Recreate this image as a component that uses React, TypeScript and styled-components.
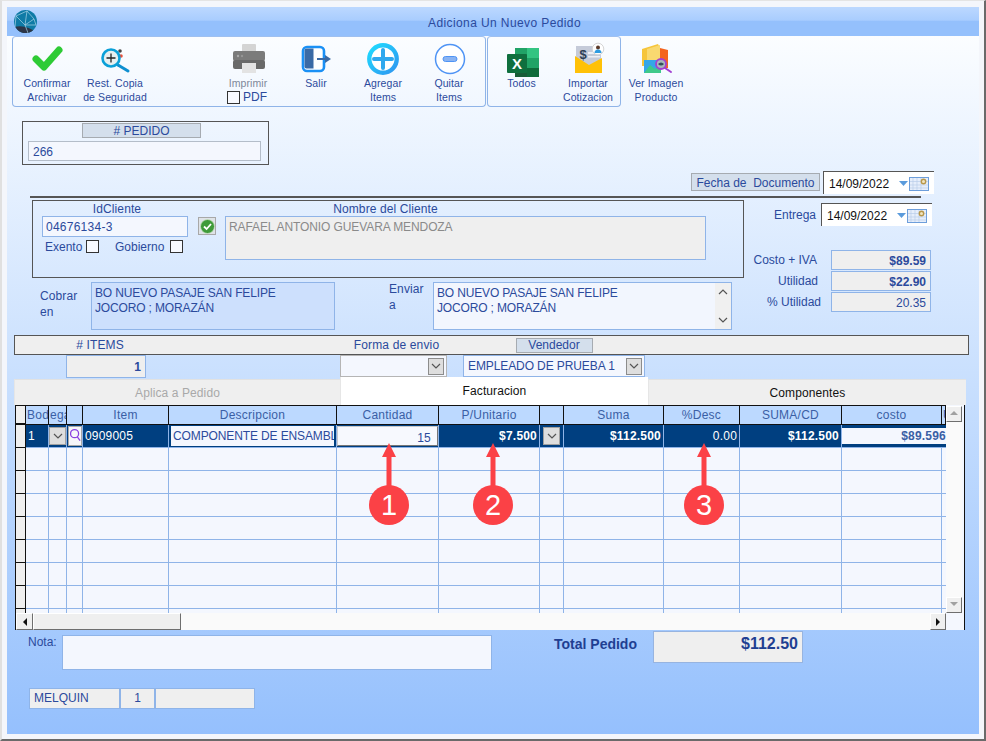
import styled, { createGlobalStyle } from 'styled-components';

const GlobalStyle = createGlobalStyle`
  html, body {
    margin: 0;
    padding: 0;
    background: #f4f6fb;
  }
  * {
    box-sizing: border-box;
  }
`;

const TEXT = '#2b4a9c';
const LINE = '#8fb4e8';
const COLS = '10px 23px 18px 16px 86px 168px 102px 101px 24px 100px 76px 102px 100px 4px';

const Page = styled.div`
  position: relative;
  width: 986px;
  height: 741px;
  padding: 6px 5px 5px 5px;
  border-top: 1px solid #e4e4e4;
  border-left: 2px solid #e0e0e0;
  border-right: 2px solid #6a6a6a;
  border-bottom: 2px solid #6a6a6a;
  background: #f4f6fb;
  font-family: "Liberation Sans", Arial, sans-serif;
  font-size: 12px;
  color: ${TEXT};
  overflow: hidden;
`;

const Win = styled.div`
  width: 972px;
  height: 727px;
  background: linear-gradient(180deg, #fbfdff 0, #fbfdff 29px, #c8dffe 52%, #95c0fd 100%);
`;

const TitleBar = styled.div`
  position: relative;
  height: 29px;
  display: flex;
  align-items: center;
  justify-content: center;
  padding: 2px 0 0 23px;
  background: linear-gradient(180deg, #bcd8ff 0, #a9cdfe 45%, #94c0fc 50%, #94c0fc 100%);
  font-size: 12px;
  letter-spacing: 0.4px;
`;

const Logo = styled.svg`
  position: absolute;
  left: 7px;
  top: 3px;
`;

const Toolbar = styled.div`
  display: flex;
  height: 71px;
  padding-left: 5px;
`;

const ToolGroup = styled.div<{ $w: number; $pl: number }>`
  display: flex;
  flex: none;
  width: ${(p) => p.$w}px;
  margin-right: 1px;
  padding: 1px 0 0 ${(p) => p.$pl}px;
  border: 1px solid ${LINE};
  border-top-color: #9fc0f0;
  border-radius: 4px;
`;

const Tool = styled.div<{ $w: number; $ml?: number; $pt?: number }>`
  display: flex;
  flex-direction: column;
  align-items: center;
  flex: none;
  width: ${(p) => p.$w}px;
  margin-left: ${(p) => p.$ml || 0}px;
  padding-top: ${(p) => p.$pt || 0}px;
  font-size: 10.5px;
  line-height: 14px;
  text-align: center;
  white-space: nowrap;
`;

const ToolIcon = styled.svg`
  display: block;
  flex: none;
  overflow: visible;
`;

const ToolText = styled.span<{ $muted?: boolean }>`
  color: ${(p) => (p.$muted ? '#7d8799' : TEXT)};
  letter-spacing: 0.1px;
`;

const PdfCheck = styled.label`
  display: flex;
  align-items: center;
  gap: 3px;
  margin-left: -2px;
  font-size: 12px;
`;

const PedidoBox = styled.div`
  display: flex;
  flex-direction: column;
  width: 247px;
  height: 44px;
  margin: 14px 0 0 15px;
  padding-top: 1px;
  border: 1px solid #555;
`;

const TagLabel = styled.div<{ $w: number; $h?: number; $ml?: number }>`
  display: flex;
  align-items: center;
  justify-content: center;
  flex: none;
  width: ${(p) => p.$w}px;
  height: ${(p) => p.$h || 15}px;
  margin-left: ${(p) => p.$ml || 0}px;
  background: #d4dfec;
  border: 1px solid #a6abb1;
  white-space: pre;
`;

const PedidoInput = styled.div`
  width: 233px;
  height: 20px;
  margin: 3px 0 0 5px;
  padding-left: 4px;
  background: #f4f7fe;
  border: 1px solid #b4bdc9;
  line-height: 20px;
`;

const FechaRow = styled.div`
  display: flex;
  justify-content: flex-end;
  align-items: center;
  gap: 3px;
  height: 22px;
  margin-top: 6px;
  padding-right: 45px;
`;

const FechaTag = styled(TagLabel)`
  padding-top: 1px;
`;

const DateBox = styled.div`
  display: flex;
  align-items: center;
  width: 111px;
  height: 23px;
  padding: 2px 5px 0 5px;
  background: #fff;
  border-top: 1px solid #555;
  border-left: 1px solid #555;
  color: #111;
`;

const DateText = styled.span`
  flex: 1;
`;

const Rule = styled.div`
  width: 891px;
  height: 2px;
  margin: 3px 0 0 23px;
  background: #555;
`;

const Main = styled.div`
  display: flex;
  margin-top: 2px;
  padding-left: 25px;
`;

const LeftCol = styled.div`
  flex: none;
  width: 712px;
`;

const ClientBox = styled.div`
  display: flex;
  height: 78px;
  padding-left: 9px;
  border: 1px solid #555;
`;

const FieldCol = styled.div<{ $w: number }>`
  display: flex;
  flex-direction: column;
  flex: none;
  width: ${(p) => p.$w}px;
`;

const FieldLabel = styled.div<{ $pl?: number; $pr?: number }>`
  height: 15px;
  padding: 0 ${(p) => p.$pr || 0}px 0 ${(p) => p.$pl || 0}px;
  line-height: 17px;
  text-align: center;
  letter-spacing: 0.1px;
`;

const IdInput = styled.div`
  height: 21px;
  padding-left: 3px;
  background: #f4f7fe;
  border: 1px solid ${LINE};
  line-height: 20px;
  letter-spacing: 0.25px;
`;

const ChecksRow = styled.div`
  display: flex;
  align-items: center;
  height: 15px;
  margin-top: 2px;
  padding-left: 3px;
`;

const CheckLabel = styled.span<{ $w: number }>`
  width: ${(p) => p.$w}px;
`;

const CheckSquare = styled.span<{ $mr?: number }>`
  flex: none;
  width: 13px;
  height: 13px;
  margin-right: ${(p) => p.$mr || 0}px;
  background: #f8faff;
  border: 1px solid #333;
`;

const ValidButton = styled.div`
  display: flex;
  align-items: center;
  justify-content: center;
  flex: none;
  width: 18px;
  height: 18px;
  margin: 16px 9px 0 10px;
  background: #dfe3e8;
  border: 1px solid #a8a8a8;
`;

const NameBox = styled.div`
  height: 44px;
  padding: 3px 0 0 3px;
  background: #efefef;
  border: 1px solid ${LINE};
  color: #8a8a8a;
  letter-spacing: -0.1px;
`;

const AddressRow = styled.div`
  display: flex;
  height: 48px;
  margin-top: 4px;
`;

const AddressLabel = styled.div<{ $w: number; $ml: number; $mt: number }>`
  flex: none;
  width: ${(p) => p.$w}px;
  margin: ${(p) => p.$mt}px 0 0 ${(p) => p.$ml}px;
  line-height: 15.5px;
  letter-spacing: 0.1px;
`;

const AddressBox = styled.div<{ $w: number; $light?: boolean }>`
  position: relative;
  flex: none;
  width: ${(p) => p.$w}px;
  padding: 3px 0 0 3px;
  background: ${(p) => (p.$light ? '#f2f6fe' : '#cde0fd')};
  border: 1px solid ${LINE};
  line-height: 15px;
  letter-spacing: -0.15px;
`;

const TextScroll = styled.div`
  position: absolute;
  top: 0;
  right: 0;
  bottom: 0;
  display: flex;
  flex-direction: column;
  align-items: center;
  justify-content: space-between;
  width: 16px;
  padding: 6px 0;
  background: #f0f0f0;
`;

const RightCol = styled.div`
  flex: none;
  width: 191px;
  padding-top: 3px;
`;

const EntregaRow = styled.div`
  display: flex;
  justify-content: flex-end;
  align-items: center;
  gap: 5px;
  padding-right: 3px;
`;

const Stats = styled.div`
  display: flex;
  flex-direction: column;
  gap: 1px;
  margin-top: 24px;
  padding-right: 4px;
`;

const StatRow = styled.div`
  display: flex;
  justify-content: flex-end;
  align-items: center;
  height: 20px;
`;

const StatLabel = styled.span<{ $mr: number }>`
  margin-right: ${(p) => p.$mr}px;
`;

const StatValue = styled.div<{ $bold?: boolean }>`
  width: 100px;
  height: 20px;
  padding: 0 4px;
  background: #efefef;
  border: 1px solid ${LINE};
  text-align: right;
  font-weight: ${(p) => (p.$bold ? 700 : 400)};
  line-height: 20px;
`;

const ItemsBar = styled.div`
  display: grid;
  grid-template-columns: 51px 80px 194px 107px 16px 182px 1fr;
  align-items: center;
  width: 955px;
  height: 20px;
  margin: 5px 0 0 7px;
  background: #efefef;
  border: 1px solid #555;
`;

const BarText = styled.div<{ $col: number; $pr?: number; $pl?: number }>`
  grid-column: ${(p) => p.$col};
  padding: 0 ${(p) => p.$pr || 0}px 0 ${(p) => p.$pl || 0}px;
  text-align: center;
  letter-spacing: 0.15px;
  white-space: nowrap;
`;

const VendedorTag = styled(TagLabel)`
  grid-column: 6;
  justify-self: center;
`;

const ItemsRow = styled.div`
  display: grid;
  grid-template-columns: 52px 80px 194px 107px 16px 182px;
  height: 24px;
  margin-left: 7px;
`;

const CountBox = styled.div`
  grid-column: 2;
  height: 23px;
  padding-right: 4px;
  background: #efefef;
  border: 1px solid ${LINE};
  text-align: right;
  font-weight: 700;
  line-height: 23px;
`;

const SelectBox = styled.div<{ $col: number; $grey?: boolean }>`
  grid-column: ${(p) => p.$col};
  display: flex;
  align-items: center;
  justify-content: space-between;
  height: 22px;
  padding: 0 2px 0 4px;
  background: #f4f7fe;
  border: 1px solid ${(p) => (p.$grey ? '#b5b5b5' : LINE)};
  letter-spacing: -0.1px;
`;

const DropButton = styled.span`
  display: flex;
  align-items: center;
  justify-content: center;
  flex: none;
  width: 16px;
  height: 17px;
  background: #dedede;
  border: 1px solid #8c8c8c;
`;

const RowDropButton = styled(DropButton)<{ $ml?: number }>`
  width: 17px;
  height: 18px;
  margin-left: ${(p) => p.$ml || 0}px;
  border-color: #a0a0a0;
`;

const Tabs = styled.div`
  display: flex;
  align-items: flex-end;
  height: 26px;
  margin-left: 7px;
`;

const Tab = styled.div<{ $w: number; $active?: boolean; $muted?: boolean }>`
  display: flex;
  align-items: center;
  justify-content: center;
  width: ${(p) => p.$w}px;
  height: ${(p) => (p.$active ? 28 : 26)}px;
  margin-top: ${(p) => (p.$active ? -2 : 0)}px;
  padding-bottom: ${(p) => (p.$active ? 1 : 0)}px;
  background: ${(p) => (p.$active ? '#fff' : '#efefef')};
  border-top: ${(p) => (p.$active ? 'none' : '1px solid #e2e2e2')};
  border-left: 1px solid #e6e6e6;
  color: ${(p) => (p.$muted ? '#a9a9a9' : '#111')};
  letter-spacing: 0.1px;
`;

const GridBox = styled.div`
  display: grid;
  grid-template-columns: 930px 18px;
  grid-template-rows: 208px 17px;
  width: 950px;
  height: 225px;
  margin-left: 8px;
  background: #f4f7fe;
  border-left: 1px solid #111;
  border-right: 1px solid #111;
  overflow: hidden;
`;

const Table = styled.div`
  overflow: hidden;
`;

const HeadRow = styled.div`
  display: grid;
  grid-template-columns: ${COLS};
  height: 20px;
  border-top: 1px solid #111;
  border-bottom: 1px solid #111;
`;

const HeadCell = styled.div<{ $left?: boolean }>`
  padding: ${(p) => (p.$left ? '0 0 0 1px' : '0')};
  background: #bcd9ff;
  border-right: 1px solid #111;
  color: #3a5fa5;
  text-align: ${(p) => (p.$left ? 'left' : 'center')};
  line-height: 18px;
  letter-spacing: 0.25px;
  white-space: nowrap;
  overflow: hidden;
`;

const RowHead = styled.div`
  background: #efefef;
  border-right: 1px solid #111;
  border-bottom: 1px solid #111;
`;

const Row = styled.div<{ $selected?: boolean }>`
  display: grid;
  grid-template-columns: ${COLS};
  height: 23px;
  background: ${(p) => (p.$selected ? '#003f80' : '#f4f7fe')};
  color: ${(p) => (p.$selected ? '#fff' : TEXT)};
`;

const Cell = styled.div<{ $right?: boolean; $bold?: boolean }>`
  display: flex;
  align-items: center;
  justify-content: ${(p) => (p.$right ? 'flex-end' : 'flex-start')};
  padding: 0 2px;
  border-right: 1px solid ${LINE};
  border-bottom: 1px solid ${LINE};
  font-weight: ${(p) => (p.$bold ? 700 : 400)};
  letter-spacing: 0.2px;
  white-space: nowrap;
  overflow: hidden;
`;

const IconCell = styled(Cell)`
  justify-content: center;
  padding: 0;
`;

const StartCell = styled(IconCell)`
  justify-content: flex-start;
`;

const CostCell = styled(IconCell)`
  grid-column: span 2;
  border-right: none;
`;

const DescInput = styled.div`
  width: 100%;
  height: 20px;
  padding: 0 2px;
  background: #f4f7fe;
  color: ${TEXT};
  letter-spacing: -0.12px;
  line-height: 20px;
  overflow: hidden;
`;

const QtyInput = styled.div`
  width: 100%;
  height: 20px;
  padding: 2px 6px 0 0;
  background: #f7f9fe;
  border: 1px solid #c9c9c9;
  border-right-color: #777;
  border-bottom-color: #777;
  color: ${TEXT};
  text-align: right;
  line-height: 19px;
`;

const CostInput = styled.div`
  width: 100%;
  height: 16px;
  background: #f4f7fe;
  color: #3a5fa5;
  text-align: right;
  font-weight: 700;
  line-height: 16px;
`;

const LensButton = styled.span`
  display: flex;
  align-items: flex-start;
  justify-content: flex-start;
  width: 14px;
  height: 20px;
  padding: 1px 0 0 1px;
  background: #f6f6fa;
  border: 1px solid #a8a8a8;
`;

const VScroll = styled.div`
  display: flex;
  flex-direction: column;
  justify-content: space-between;
  width: 16px;
  height: 207px;
  margin-top: 1px;
  background: #fafafa;
`;

const HScroll = styled.div`
  display: flex;
  height: 17px;
  background: #fafafa;
`;

const ScrollButton = styled.div<{ $w: number; $h: number }>`
  display: flex;
  align-items: center;
  justify-content: center;
  flex: none;
  width: ${(p) => p.$w}px;
  height: ${(p) => p.$h}px;
  background: #efefef;
  border: 1px solid #fff;
  border-right-color: #6e6e6e;
  border-bottom-color: #6e6e6e;
`;

const Thumb = styled(ScrollButton)`
  margin-right: auto;
`;

const BottomRow = styled.div`
  display: flex;
  align-items: flex-start;
  height: 39px;
  margin-top: 1px;
  padding-left: 21px;
`;

const NotaLabel = styled.div`
  flex: none;
  width: 34px;
  margin-top: 4px;
`;

const NotaBox = styled.div`
  flex: none;
  width: 430px;
  height: 35px;
  margin-top: 4px;
  background: #f4f7fe;
  border: 1px solid ${LINE};
`;

const TotalLabel = styled.div`
  flex: none;
  width: 99px;
  margin: 5px 0 0 62px;
  font-size: 14px;
  font-weight: 700;
  color: #1f3f92;
`;

const TotalBox = styled.div`
  flex: none;
  width: 150px;
  height: 32px;
  padding: 3px 4px 0 0;
  background: #efefef;
  border: 1px solid #97b4e0;
  color: #1f3f92;
  text-align: right;
  font-size: 16px;
  font-weight: 700;
`;

const StatusRow = styled.div`
  display: grid;
  grid-template-columns: 91px 35px 100px;
  width: 226px;
  height: 20px;
  margin: 18px 0 0 22px;
`;

const StatusCell = styled.div<{ $center?: boolean }>`
  padding-left: ${(p) => (p.$center ? 0 : 4)}px;
  background: #efefef;
  border: 1px solid ${LINE};
  text-align: ${(p) => (p.$center ? 'center' : 'left')};
  line-height: 19px;
`;

const Marker = styled.div<{ $x: number }>`
  position: absolute;
  left: ${(p) => p.$x - 2}px;
  top: 441px;
  width: 40px;
`;

const MarkerArrow = styled.svg`
  display: block;
  margin: 0 auto;
`;

const MarkerBadge = styled.div`
  display: flex;
  align-items: center;
  justify-content: center;
  width: 40px;
  height: 40px;
  margin-top: -1px;
  border-radius: 50%;
  background: #fb4146;
  color: #fff;
  font-size: 29px;
  line-height: 1;
`;

const Chevron = ({ up }: { up?: boolean }) => (
  <svg width="10" height="6" viewBox="0 0 10 6">
    <path d={up ? 'M1 5 5 1l4 4' : 'M1 1l4 4 4-4'} fill="none" stroke="#555" strokeWidth="1.2" />
  </svg>
);

const Triangle = ({ dir }: { dir: 'up' | 'down' | 'left' | 'right' }) => {
  const pts = { up: '0,5 4,1 8,5', down: '0,1 8,1 4,5', left: '6,0 6,8 2,4', right: '2,0 2,8 6,4' };
  const dark = dir === 'left' || dir === 'right';
  return (
    <svg width="8" height="8" viewBox="0 0 8 8">
      <polygon points={pts[dir]} fill={dark ? '#111' : '#a0a0a0'} />
    </svg>
  );
};

const CalendarIcon = () => (
  <svg width="31" height="16" viewBox="0 0 31 16">
    <polygon points="1,5 10,5 5.5,10" fill="#5b9bdc" />
    <rect x="11.5" y="1.5" width="19" height="13" fill="#e6eefb" stroke="#6d9edb" />
    <path d="M15 2v12M19 2v12M23 2v12M12 5.5h18M12 9h18M12 12h18" stroke="#b9cdea" strokeWidth="0.7" />
    <circle cx="25.5" cy="5.5" r="2.2" fill="#f0e4c0" stroke="#b8974a" strokeWidth="1.4" />
  </svg>
);

const GlobeLogo = () => (
  <Logo width="23" height="23" viewBox="0 0 23 23">
    <defs>
      <clipPath id="globe">
        <circle cx="11.5" cy="11.5" r="11.5" />
      </clipPath>
    </defs>
    <g clipPath="url(#globe)">
      <rect width="23" height="23" fill="#0f7ba6" />
      <path d="M0 17q12-3 23 6H0z" fill="#2d3648" />
      <path d="M2 6 13 1l7 8-9 6L2 6zM13 1l-2 14 3 8M2 6l-1 11M20 9l2 6-11 0" fill="none" stroke="#a9d4e6" strokeWidth="0.7" />
    </g>
  </Logo>
);

const CheckIcon = () => (
  <ToolIcon width="40" height="38" viewBox="0 0 40 38">
    <polyline points="9,21 17,29 32,12" fill="none" stroke="#2ecb35" strokeWidth="7" strokeLinecap="round" strokeLinejoin="round" />
  </ToolIcon>
);

const RestoreIcon = () => (
  <ToolIcon width="40" height="38" viewBox="0 0 40 38">
    <circle cx="25" cy="13" r="1.8" fill="#444" />
    <circle cx="26" cy="18" r="1.8" fill="#e8503a" />
    <line x1="23" y1="27" x2="33" y2="33" stroke="#0e8fd0" strokeWidth="3" strokeLinecap="round" />
    <circle cx="16" cy="20" r="8.5" fill="#e6eff0" stroke="#0aa0d8" strokeWidth="2.6" />
    <path d="M11.5 20h9M16 15.5v9" stroke="#222" strokeWidth="1.3" />
  </ToolIcon>
);

const PrinterIcon = () => (
  <ToolIcon width="40" height="38" viewBox="0 0 40 38">
    <rect x="14" y="6" width="14" height="9" rx="1" fill="#d4d4d4" />
    <rect x="5" y="13" width="32" height="10" rx="2" fill="#7b7b7b" />
    <rect x="5" y="22" width="32" height="9" rx="2" fill="#696969" />
    <circle cx="10" cy="18" r="1.2" fill="#a9a9a9" />
    <circle cx="14" cy="18" r="1.2" fill="#969696" />
    <rect x="14" y="25" width="14" height="10" fill="#e3e3e3" />
  </ToolIcon>
);

const ExitIcon = () => (
  <ToolIcon width="40" height="38" viewBox="0 0 40 38">
    <rect x="7" y="9" width="21" height="24" rx="4" fill="#fff" stroke="#1a90f5" strokeWidth="2.6" />
    <path d="M8.5 12.5q0-2 2-2h7v20h-7q-2 0-2-2z" fill="#3a6aa5" />
    <rect x="21" y="20" width="8" height="2" fill="#3a6aa5" />
    <polygon points="29,17 35,21 29,25" fill="#3a6aa5" />
  </ToolIcon>
);

const PlusIcon = () => (
  <ToolIcon width="40" height="38" viewBox="0 0 40 38">
    <defs>
      <linearGradient id="plusRing" x1="0" y1="0" x2="1" y2="1">
        <stop offset="0" stopColor="#1fdcff" />
        <stop offset="1" stopColor="#2f96f0" />
      </linearGradient>
    </defs>
    <circle cx="20" cy="21" r="13.7" fill="#fff" stroke="url(#plusRing)" strokeWidth="4.4" />
    <path d="M11 21h18M20 12v18" stroke="#2fa8ee" strokeWidth="4" strokeLinecap="round" />
  </ToolIcon>
);

const MinusIcon = () => (
  <ToolIcon width="40" height="38" viewBox="0 0 40 38">
    <circle cx="21" cy="21" r="14.5" fill="#fff" stroke="#4f94f5" strokeWidth="1.5" />
    <rect x="14" y="18.5" width="14" height="5" rx="2.5" fill="#8ab4f3" stroke="#4f94f5" />
  </ToolIcon>
);

const ExcelIcon = () => (
  <ToolIcon width="40" height="38" viewBox="0 0 40 38">
    <rect x="13" y="10" width="12" height="10" fill="#21a366" />
    <rect x="25" y="10" width="12" height="10" fill="#33c481" />
    <rect x="13" y="20" width="12" height="10" fill="#107c41" />
    <rect x="25" y="20" width="12" height="10" fill="#21a366" />
    <rect x="13" y="30" width="12" height="9" fill="#185c37" />
    <rect x="25" y="30" width="12" height="9" fill="#0f6b3a" />
    <rect x="5" y="16" width="20" height="19" rx="1" fill="#0f6f3e" />
    <text x="15" y="31" textAnchor="middle" fontFamily="Liberation Sans" fontSize="15" fontWeight="700" fill="#fff">X</text>
  </ToolIcon>
);

const ImportIcon = () => (
  <ToolIcon width="40" height="38" viewBox="0 0 40 38">
    <rect x="8" y="8" width="25" height="20" fill="#c5cbd9" />
    <rect x="20" y="14" width="12" height="2" fill="#eef0f5" />
    <rect x="20" y="18" width="12" height="1.5" fill="#eef0f5" />
    <text x="15" y="21" textAnchor="middle" fontFamily="Liberation Sans" fontSize="13" fontWeight="700" fill="#2d3f55">$</text>
    <polygon points="7,18 21,27 34,20 34,35 7,35" fill="#ffc107" />
    <circle cx="30" cy="11" r="5.8" fill="#fff" stroke="#d5d5d5" />
    <circle cx="30" cy="9.5" r="2" fill="#5b3a29" />
    <path d="M26.5 15q0-3.5 3.5-3.5t3.5 3.5z" fill="#2f9be0" />
  </ToolIcon>
);

const ImageIcon = () => (
  <ToolIcon width="40" height="38" viewBox="0 0 40 38">
    <polygon points="24,10 32,12 32,30 24,30" fill="#f4641e" />
    <polygon points="6,11 22,6 24,10 24,28 6,28" fill="#f6c53a" />
    <polygon points="11,11 24,7 24,28 11,28" fill="#f9d970" />
    <rect x="8" y="22" width="17" height="13" fill="#35a6e8" />
    <polygon points="8,35 14,27 19,31 22,28 25,32 25,35" fill="#3fc98a" />
    <line x1="29" y1="30" x2="35" y2="34" stroke="#a13fd1" strokeWidth="2" strokeLinecap="round" />
    <circle cx="25" cy="26" r="5" fill="#a7b7bd" stroke="#a13fd1" strokeWidth="1.8" />
    <path d="M22 26q3-3 6 0q-3 3-6 0z" fill="#33505a" />
  </ToolIcon>
);

const ValidIcon = () => (
  <svg width="15" height="15" viewBox="0 0 15 15">
    <circle cx="7.5" cy="7.5" r="7" fill="#3f9b3a" stroke="#cfe3c8" strokeWidth="0.8" />
    <path d="M4 7.5 6.6 10 11 5" fill="none" stroke="#fff" strokeWidth="1.8" />
  </svg>
);

const LensIcon = () => (
  <svg width="12" height="15" viewBox="0 0 12 15">
    <circle cx="5" cy="5.5" r="4.4" fill="none" stroke="#8a3fe0" strokeWidth="1.4" />
    <line x1="8" y1="9" x2="11" y2="13" stroke="#8a3fe0" strokeWidth="1.4" />
  </svg>
);

const headers = ['Item', 'Descripcion', 'Cantidad', 'P/Unitario', '', 'Suma', '%Desc', 'SUMA/CD', 'costo'];

const markers = [
  { x: 369, n: 1 },
  { x: 473, n: 2 },
  { x: 684, n: 3 },
];

const DateField = () => (
  <DateBox>
    <DateText>14/09/2022</DateText>
    <CalendarIcon />
  </DateBox>
);

const App = () => {
  const emptyRows = Array.from({ length: 8 }, (_, i) => i);

  return (
    <Page>
      <GlobalStyle />
      <Win>
        <TitleBar>
          <GlobeLogo />
          Adiciona Un Nuevo Pedido
        </TitleBar>

        <Toolbar>
          <ToolGroup $w={474} $pl={4}>
            <Tool $w={60}>
              <CheckIcon />
              <ToolText>Confirmar</ToolText>
              <ToolText>Archivar</ToolText>
            </Tool>
            <Tool $w={64} $ml={6}>
              <RestoreIcon />
              <ToolText>Rest. Copia</ToolText>
              <ToolText>de Seguridad</ToolText>
            </Tool>
            <Tool $w={68} $ml={67}>
              <PrinterIcon />
              <ToolText $muted>Imprimir</ToolText>
              <PdfCheck>
                <CheckSquare />
                PDF
              </PdfCheck>
            </Tool>
            <Tool $w={68}>
              <ExitIcon />
              <ToolText>Salir</ToolText>
            </Tool>
            <Tool $w={66}>
              <PlusIcon />
              <ToolText>Agregar</ToolText>
              <ToolText>Items</ToolText>
            </Tool>
            <Tool $w={66}>
              <MinusIcon />
              <ToolText>Quitar</ToolText>
              <ToolText>Items</ToolText>
            </Tool>
          </ToolGroup>
          <ToolGroup $w={134} $pl={0}>
            <Tool $w={67}>
              <ExcelIcon />
              <ToolText>Todos</ToolText>
            </Tool>
            <Tool $w={66}>
              <ImportIcon />
              <ToolText>Importar</ToolText>
              <ToolText>Cotizacion</ToolText>
            </Tool>
          </ToolGroup>
          <Tool $w={68} $pt={2}>
            <ImageIcon />
            <ToolText>Ver Imagen</ToolText>
            <ToolText>Producto</ToolText>
          </Tool>
        </Toolbar>

        <PedidoBox>
          <TagLabel $w={119} $ml={59}># PEDIDO</TagLabel>
          <PedidoInput>266</PedidoInput>
        </PedidoBox>

        <FechaRow>
          <FechaTag $w={129} $h={18}>Fecha de  Documento</FechaTag>
          <DateField />
        </FechaRow>
        <Rule />

        <Main>
          <LeftCol>
            <ClientBox>
              <FieldCol $w={146}>
                <FieldLabel $pl={4}>IdCliente</FieldLabel>
                <IdInput>04676134-3</IdInput>
                <ChecksRow>
                  <CheckLabel $w={41}>Exento</CheckLabel>
                  <CheckSquare $mr={16} />
                  <CheckLabel $w={55}>Gobierno</CheckLabel>
                  <CheckSquare />
                </ChecksRow>
              </FieldCol>
              <ValidButton>
                <ValidIcon />
              </ValidButton>
              <FieldCol $w={481}>
                <FieldLabel $pr={160}>Nombre del Cliente</FieldLabel>
                <NameBox>RAFAEL ANTONIO GUEVARA MENDOZA</NameBox>
              </FieldCol>
            </ClientBox>

            <AddressRow>
              <AddressLabel $w={51} $ml={8} $mt={7}>
                Cobrar
                <br />
                en
              </AddressLabel>
              <AddressBox $w={244}>
                BO NUEVO PASAJE SAN FELIPE
                <br />
                JOCORO ; MORAZÁN
              </AddressBox>
              <AddressLabel $w={44} $ml={54} $mt={0}>
                Enviar
                <br />a
              </AddressLabel>
              <AddressBox $w={299} $light>
                BO NUEVO PASAJE SAN FELIPE
                <br />
                JOCORO ; MORAZÁN
                <TextScroll>
                  <Chevron up />
                  <Chevron />
                </TextScroll>
              </AddressBox>
            </AddressRow>
          </LeftCol>

          <RightCol>
            <EntregaRow>
              Entrega
              <DateField />
            </EntregaRow>
            <Stats>
              <StatRow>
                <StatLabel $mr={14}>Costo + IVA</StatLabel>
                <StatValue $bold>$89.59</StatValue>
              </StatRow>
              <StatRow>
                <StatLabel $mr={13}>Utilidad</StatLabel>
                <StatValue $bold>$22.90</StatValue>
              </StatRow>
              <StatRow>
                <StatLabel $mr={10}>% Utilidad</StatLabel>
                <StatValue>20.35</StatValue>
              </StatRow>
            </Stats>
          </RightCol>
        </Main>

        <ItemsBar>
          <BarText $col={2} $pr={12}># ITEMS</BarText>
          <BarText $col={4} $pl={6}>Forma de envio</BarText>
          <VendedorTag $w={77}>Vendedor</VendedorTag>
        </ItemsBar>
        <ItemsRow>
          <CountBox>1</CountBox>
          <SelectBox $col={4} $grey>
            <span />
            <DropButton>
              <Chevron />
            </DropButton>
          </SelectBox>
          <SelectBox $col={6}>
            EMPLEADO DE PRUEBA 1
            <DropButton>
              <Chevron />
            </DropButton>
          </SelectBox>
        </ItemsRow>

        <Tabs>
          <Tab $w={326} $muted>Aplica a Pedido</Tab>
          <Tab $w={308} $active>Facturacion</Tab>
          <Tab $w={318}>Componentes</Tab>
        </Tabs>

        <GridBox>
          <Table>
            <HeadRow>
              <RowHead />
              <HeadCell $left>Bod</HeadCell>
              <HeadCell $left>ega</HeadCell>
              <HeadCell />
              {headers.map((h, i) => (
                <HeadCell key={i}>{h}</HeadCell>
              ))}
              <HeadCell $left>U</HeadCell>
            </HeadRow>

            <Row $selected>
              <RowHead />
              <Cell>1</Cell>
              <StartCell>
                <RowDropButton>
                  <Chevron />
                </RowDropButton>
              </StartCell>
              <IconCell>
                <LensButton>
                  <LensIcon />
                </LensButton>
              </IconCell>
              <Cell>0909005</Cell>
              <Cell>
                <DescInput>COMPONENTE DE ENSAMBLE</DescInput>
              </Cell>
              <IconCell>
                <QtyInput>15</QtyInput>
              </IconCell>
              <Cell $right $bold>$7.500</Cell>
              <IconCell>
                <RowDropButton>
                  <Chevron />
                </RowDropButton>
              </IconCell>
              <Cell $right $bold>$112.500</Cell>
              <Cell $right>0.00</Cell>
              <Cell $right $bold>$112.500</Cell>
              <CostCell>
                <CostInput>$89.596</CostInput>
              </CostCell>
            </Row>

            {emptyRows.map((r) => (
              <Row key={r}>
                <RowHead />
                {Array.from({ length: 13 }, (_, c) => (
                  <Cell key={c} />
                ))}
              </Row>
            ))}
          </Table>

          <VScroll>
            <ScrollButton $w={16} $h={16}>
              <Triangle dir="up" />
            </ScrollButton>
            <ScrollButton $w={16} $h={16}>
              <Triangle dir="down" />
            </ScrollButton>
          </VScroll>

          <HScroll>
            <ScrollButton $w={17} $h={17}>
              <Triangle dir="left" />
            </ScrollButton>
            <Thumb $w={148} $h={17} />
            <ScrollButton $w={16} $h={17}>
              <Triangle dir="right" />
            </ScrollButton>
          </HScroll>
        </GridBox>

        <BottomRow>
          <NotaLabel>Nota:</NotaLabel>
          <NotaBox />
          <TotalLabel>Total Pedido</TotalLabel>
          <TotalBox>$112.50</TotalBox>
        </BottomRow>

        <StatusRow>
          <StatusCell>MELQUIN</StatusCell>
          <StatusCell $center>1</StatusCell>
          <StatusCell />
        </StatusRow>
      </Win>

      {markers.map((m) => (
        <Marker key={m.n} $x={m.x}>
          <MarkerArrow width="16" height="44" viewBox="0 0 16 44">
            <polygon points="8,1 15,15 10.5,15 10.5,44 5.5,44 5.5,15 1,15" fill="#fb4146" />
          </MarkerArrow>
          <MarkerBadge>{m.n}</MarkerBadge>
        </Marker>
      ))}
    </Page>
  );
};

export default App;
